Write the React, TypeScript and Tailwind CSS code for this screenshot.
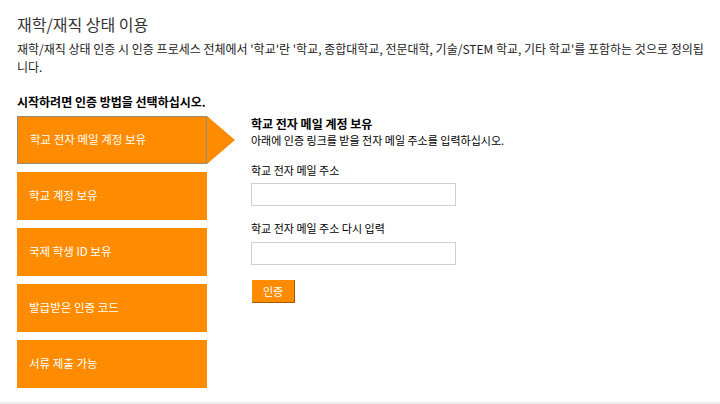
import React from "react";

const options = [
  "학교 전자 메일 계정 보유",
  "학교 계정 보유",
  "국제 학생 ID 보유",
  "발급받은 인증 코드",
  "서류 제출 가능",
];

export default function App() {
  return (
    <div
      className="w-[720px] h-[404px] flex flex-col bg-white text-[#333]"
      style={{ fontFamily: '"Noto Sans CJK KR", "Noto Sans", sans-serif' }}
    >
      <div className="flex-1 pl-[17px] pr-[16px] pt-[12px]">
        <h1 className="text-[16px] leading-[24px] font-normal text-[#333]">재학/재직 상태 이용</h1>
        <p className="mt-[4px] text-[12px] leading-[18px] text-[#222]">
          재학/재직 상태 인증 시 인증 프로세스 전체에서 '학교'란 '학교, 종합대학교, 전문대학, 기술/STEM 학교, 기타 학교'를 포함하는 것으로 정의됩니다.
        </p>
        <p className="mt-[17px] text-[12px] leading-[18px] font-bold text-black">시작하려면 인증 방법을 선택하십시오.</p>
        <div className="mt-[5px] flex">
          <div className="flex flex-col gap-[8px] w-[190px]">
            {options.map((o, i) => (
              <div
                key={o}
                className={
                  "relative h-[48px] bg-[#ff8c00] flex items-center pl-[12px] text-[11.5px] text-white " +
                  (i === 0 ? "border border-[#9a8a78]" : "")
                }
              >
                {o}
                {i === 0 && (
                  <svg className="absolute left-[189px] top-[-1px]" width="29" height="48" viewBox="0 0 29 48">
                    <polygon points="0,0 28,24 0,48" fill="#ff8c00" />
                  </svg>
                )}
              </div>
            ))}
          </div>
          <div className="ml-[44px] flex flex-col">
            <div className="text-[12px] leading-[16px] font-bold text-black">학교 전자 메일 계정 보유</div>
            <div className="text-[11px] leading-[16px] text-black">아래에 인증 링크를 받을 전자 메일 주소를 입력하십시오.</div>
            <label className="mt-[14px] text-[11px] leading-[16px] text-black">학교 전자 메일 주소</label>
            <input className="mt-[5px] w-[205px] h-[23px] border border-[#cfcfcf] bg-white outline-none" />
            <label className="mt-[14px] text-[11px] leading-[16px] text-black">학교 전자 메일 주소 다시 입력</label>
            <input className="mt-[6px] w-[205px] h-[23px] border border-[#cfcfcf] bg-white outline-none" />
            <button className="mt-[15px] ml-[1px] w-[43px] h-[23px] bg-[#ff8c00] border-r border-b border-[#a45a00] text-white text-[11px] flex items-center justify-center">
              인증
            </button>
          </div>
        </div>
      </div>
      <div className="h-[2px] bg-[#ececec]" />
    </div>
  );
}
